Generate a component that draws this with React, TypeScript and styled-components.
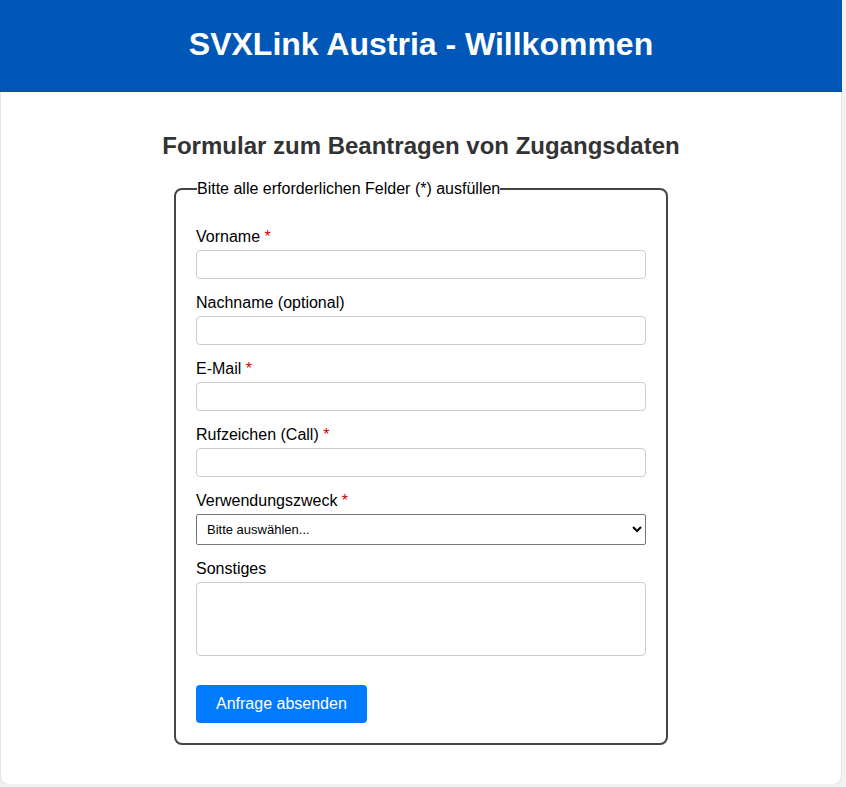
import styled, { createGlobalStyle } from "styled-components";

const GlobalStyle = createGlobalStyle`
  body {
    margin: 0 4px 0 0;
    background-color: #f2f2f2;
    font-family: "Liberation Sans", Arial, sans-serif;
    color: #000;
  }
`;

export default function App() {
  return (
    <>
      <GlobalStyle />
      <Header>
        <HeaderTitle>SVXLink Austria - Willkommen</HeaderTitle>
      </Header>
      <Container>
        <FormTitle>Formular zum Beantragen von Zugangsdaten</FormTitle>
        <form onSubmit={(e) => e.preventDefault()}>
          <Fieldset>
            <Legend>Bitte alle erforderlichen Felder (*) ausfüllen</Legend>

            <FormGroup>
              <Label htmlFor="vorname">
                Vorname <Required>*</Required>
              </Label>
              <Input id="vorname" type="text" />
            </FormGroup>

            <FormGroup>
              <Label htmlFor="nachname">Nachname (optional)</Label>
              <Input id="nachname" type="text" />
            </FormGroup>

            <FormGroup>
              <Label htmlFor="email">
                E-Mail <Required>*</Required>
              </Label>
              <Input id="email" type="email" />
            </FormGroup>

            <FormGroup>
              <Label htmlFor="call">
                Rufzeichen (Call) <Required>*</Required>
              </Label>
              <Input id="call" type="text" />
            </FormGroup>

            <FormGroup>
              <Label htmlFor="zweck">
                Verwendungszweck <Required>*</Required>
              </Label>
              <Select id="zweck" defaultValue="">
                <option value="">Bitte auswählen...</option>
                <option value="repeater">Repeater</option>
                <option value="hotspot">Hotspot</option>
              </Select>
            </FormGroup>

            <FormGroup>
              <Label htmlFor="sonstiges">Sonstiges</Label>
              <TextArea id="sonstiges" />
            </FormGroup>

            <SubmitBtn type="submit">Anfrage absenden</SubmitBtn>
          </Fieldset>
        </form>
      </Container>
    </>
  );
}

const Header = styled.header`
  height: 92px;
  margin-right: -4px;
  padding-right: 4px;
  background-color: #0057b8;
  display: flex;
  align-items: center;
  justify-content: center;
`;

const HeaderTitle = styled.h1`
  margin: 0;
  padding-bottom: 4px;
  color: #ffffff;
  font-size: 32px;
  font-weight: bold;
`;

const Container = styled.main`
  max-width: 840px;
  margin: 0 auto;
  padding: 20px 20px 39px;
  box-sizing: border-box;
  background-color: #ffffff;
  border-radius: 0 0 8px 8px;
  box-shadow: 0 0 4px rgba(0, 0, 0, 0.12);
`;

const FormTitle = styled.h2`
  margin: 20px 0 20px;
  text-align: center;
  font-size: 24px;
  line-height: 28px;
  color: #333333;
`;

const Fieldset = styled.fieldset`
  width: 494px;
  box-sizing: border-box;
  margin: 0 auto;
  padding: 30px 20px 20px;
  border: 2px solid #444444;
  border-radius: 8px;
`;

const Legend = styled.legend`
  padding: 0;
  font-size: 16px;
  line-height: 18px;
  margin-left: 1px;
`;

const FormGroup = styled.div`
  display: flex;
  flex-direction: column;
  margin-bottom: 15px;
`;

const Label = styled.label`
  font-size: 16px;
  line-height: 18px;
  margin-bottom: 4px;
`;

const Required = styled.span`
  color: #d00000;
`;

const Input = styled.input`
  height: 29px;
  box-sizing: border-box;
  width: 100%;
  border: 1px solid #cccccc;
  border-radius: 4px;
  padding: 4px 8px;
  font-size: 14px;
  font-family: inherit;
`;

const Select = styled.select`
  height: 31px;
  box-sizing: border-box;
  width: 100%;
  border: 1px solid #767676;
  border-radius: 2px;
  padding: 0 6px;
  font-size: 13px;
  font-family: inherit;
  background-color: #ffffff;
  color: #000;
`;

const TextArea = styled.textarea`
  display: block;
  height: 74px;
  box-sizing: border-box;
  width: 100%;
  border: 1px solid #cccccc;
  border-radius: 4px;
  padding: 6px 8px;
  font-family: inherit;
  resize: none;
`;

const SubmitBtn = styled.button`
  margin-top: 14px;
  height: 38px;
  padding: 0 20px;
  border: none;
  border-radius: 4px;
  background-color: #007bff;
  color: #ffffff;
  font-size: 16px;
  font-family: inherit;
  cursor: pointer;
`;
